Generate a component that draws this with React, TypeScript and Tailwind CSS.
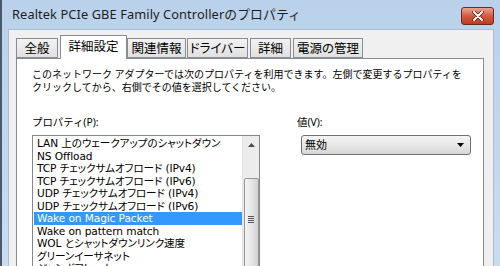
const items = [
  'LAN 上のウェークアップのシャットダウン',
  'NS Offload',
  'TCP チェックサムオフロード (IPv4)',
  'TCP チェックサムオフロード (IPv6)',
  'UDP チェックサムオフロード (IPv4)',
  'UDP チェックサムオフロード (IPv6)',
  'Wake on Magic Packet',
  'Wake on pattern match',
  'WOL とシャットダウンリンク速度',
  'グリーンイーサネット',
  'ジャンボフレーム',
];

// label, width, left margin
const tabs: [string, string, string][] = [
  ['全般', 'w-[42px]', 'ml-0'],
  ['詳細設定', 'w-[67px]', 'ml-[2px]'],
  ['関連情報', 'w-[59px]', 'ml-0'],
  ['ドライバー', 'w-[61px]', 'ml-[1px]'],
  ['詳細', 'w-[41px]', 'ml-[2px]'],
  ['電源の管理', 'w-[70px]', 'ml-[2px]'],
];

const jp = "font-['Noto_Sans','Noto_Sans_CJK_JP',sans-serif]";

export default function App() {
  return (
    <div className={`w-[500px] h-[266px] overflow-hidden flex flex-col bg-gradient-to-b from-[#b9d1ea] to-[#c9dcf0] border-l-[2px] border-l-[#4a5a6c] text-[#000] ${jp}`}>
      {/* Title bar */}
      <div className="h-[29px] shrink-0 flex items-center pl-[10px] pr-[6px]">
        <span className="text-[12.8px] text-[#1e1e1e] tracking-[0.1px]">Realtek PCIe GBE Family Controllerのプロパティ</span>
        <div className="ml-auto mt-[3px] w-[33px] h-[18px] rounded-[3px] border border-[#6b2a20] bg-gradient-to-b from-[#e8a493] via-[#d35a3f] to-[#c23a20] flex items-center justify-center">
          <svg width="12" height="10" viewBox="0 0 12 10">
            <path d="M2 1 L10 9 M10 1 L2 9" stroke="#4a1a12" strokeWidth="3.4" strokeLinecap="round" />
            <path d="M2 1 L10 9 M10 1 L2 9" stroke="#fff" strokeWidth="2" strokeLinecap="round" />
          </svg>
        </div>
      </div>

      {/* Body */}
      <div className="flex-1 ml-[6px] mr-[6px] bg-[#f0f0f0] border-t border-l border-r border-[#a8bcd4] pl-[7px] pt-[4px]">
        {/* Tabs */}
        <div className="flex items-end h-[24px]">
          {tabs.map(([t, w, m], i) =>
            i === 1 ? (
              <div key={t} className={`${w} ${m} h-[24px] -mb-px z-10 pt-[2px] text-center whitespace-nowrap bg-white border border-b-0 border-[#898c95] text-[12.5px] relative`}>
                {t}
              </div>
            ) : (
              <div key={t} className={`${w} ${m} h-[20px] pt-[1px] text-center whitespace-nowrap [font-feature-settings:'palt'] bg-gradient-to-b from-[#f2f2f2] to-[#e1e1e1] border border-[#898c95] text-[12.5px]`}>
                {t}
              </div>
            )
          )}
        </div>

        {/* Panel */}
        <div className="w-[468px] h-[240px] bg-white border border-[#898c95] pl-[15px] pt-[9px]">
          <div className="text-[10px] leading-[13px] text-[#000] whitespace-nowrap">
            <div>このネットワーク アダプターでは次のプロパティを利用できます。左側で変更するプロパティを</div>
            <div>クリックしてから、右側でその値を選択してください。</div>
          </div>

          <div className="flex mt-[22px]">
            {/* Property list */}
            <div className="w-[228px]">
              <div className="text-[10.4px] leading-[13px] mb-[6px]">プロパティ(P):</div>
              <div className="h-[140px] border border-[#828790] flex">
                <div className="flex-1 pl-[1px] pt-[1px]">
                  {items.map((it) => (
                    <div
                      key={it}
                      className={`h-[12.5px] leading-[12.5px] pl-[3px] text-[10.6px] whitespace-nowrap font-['DejaVu_Sans','Noto_Sans_CJK_JP',sans-serif] [font-feature-settings:'palt'] tracking-[-0.1px] ${
                        it === 'Wake on Magic Packet' ? 'bg-[#3399ff] text-white' : ''
                      }`}
                    >
                      {it}
                    </div>
                  ))}
                </div>
                {/* Scrollbar */}
                <div className="w-[17px] bg-[#ececec] border-l border-[#e2e2e2] flex flex-col items-center">
                  <div className="h-[19px] flex items-center justify-center">
                    <svg width="7" height="4" viewBox="0 0 7 4">
                      <path d="M3.5 0 L7 4 L0 4 Z" fill="#4d4d4d" />
                    </svg>
                  </div>
                  <div className="mt-[24px] w-[15px] h-[100px] rounded-[2px] border border-[#959595] bg-gradient-to-r from-[#f3f3f3] via-[#e6e6e6] to-[#d2d2d2] flex justify-center">
                    <div className="mt-[37px] flex flex-col gap-[1px]">
                      <div className="w-[6px] h-px bg-[#555]" />
                      <div className="w-[6px] h-px bg-[#555]" />
                      <div className="w-[6px] h-px bg-[#555]" />
                      <div className="w-[6px] h-px bg-[#555]" />
                    </div>
                  </div>
                </div>
              </div>
            </div>

            {/* Value */}
            <div className="ml-[37px] w-[174px]">
              <div className="text-[10.4px] leading-[13px] mb-[6px]">値(V):</div>
              <div className="ml-[4px] h-[20px] rounded-[3px] border border-[#707070] bg-gradient-to-b from-[#f4f4f4] via-[#e8e8e8] to-[#d6d6d6] flex items-center pl-[3px] pr-[6px]">
                <span className="text-[11px]">無効</span>
                <svg className="ml-auto" width="7" height="4" viewBox="0 0 7 4">
                  <path d="M0 0 L7 0 L3.5 4 Z" fill="#000" />
                </svg>
              </div>
            </div>
          </div>
        </div>
      </div>
    </div>
  );
}
